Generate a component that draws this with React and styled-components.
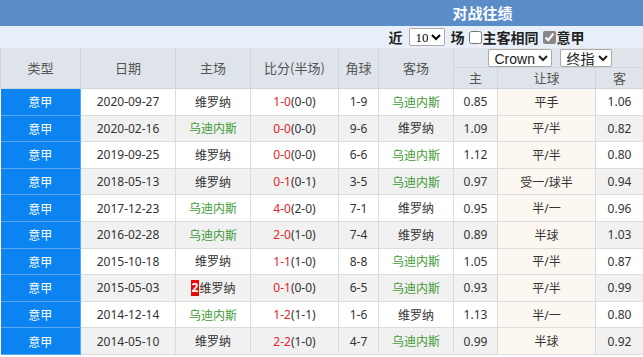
import styled, { createGlobalStyle } from "styled-components";

const GlobalStyle = createGlobalStyle`
  html, body { margin: 0; padding: 0; background: #fff; }
  body { font-family: "Noto Sans", "Noto Sans CJK SC", sans-serif; }
`;

const rows = [
  { date: "2020-09-27", home: "维罗纳", homeGreen: false, ft: "1-0", ht: "(0-0)", corner: "1-9", away: "乌迪内斯", awayGreen: true, h: "0.85", line: "平手", a: "1.06" },
  { date: "2020-02-16", home: "乌迪内斯", homeGreen: true, ft: "0-0", ht: "(0-0)", corner: "9-6", away: "维罗纳", awayGreen: false, h: "1.09", line: "平/半", a: "0.82" },
  { date: "2019-09-25", home: "维罗纳", homeGreen: false, ft: "0-0", ht: "(0-0)", corner: "6-6", away: "乌迪内斯", awayGreen: true, h: "1.12", line: "平/半", a: "0.80" },
  { date: "2018-05-13", home: "维罗纳", homeGreen: false, ft: "0-1", ht: "(0-1)", corner: "3-5", away: "乌迪内斯", awayGreen: true, h: "0.97", line: "受一/球半", a: "0.94" },
  { date: "2017-12-23", home: "乌迪内斯", homeGreen: true, ft: "4-0", ht: "(2-0)", corner: "7-1", away: "维罗纳", awayGreen: false, h: "0.95", line: "半/一", a: "0.96" },
  { date: "2016-02-28", home: "乌迪内斯", homeGreen: true, ft: "2-0", ht: "(1-0)", corner: "7-4", away: "维罗纳", awayGreen: false, h: "0.89", line: "半球", a: "1.03" },
  { date: "2015-10-18", home: "维罗纳", homeGreen: false, ft: "1-1", ht: "(1-0)", corner: "8-8", away: "乌迪内斯", awayGreen: true, h: "1.05", line: "平/半", a: "0.87" },
  { date: "2015-05-03", home: "维罗纳", homeGreen: false, badge: "2", ft: "0-1", ht: "(0-0)", corner: "6-5", away: "乌迪内斯", awayGreen: true, h: "0.93", line: "平/半", a: "0.99" },
  { date: "2014-12-14", home: "乌迪内斯", homeGreen: true, ft: "1-2", ht: "(1-1)", corner: "1-6", away: "维罗纳", awayGreen: false, h: "1.13", line: "半/一", a: "0.80" },
  { date: "2014-05-10", home: "维罗纳", homeGreen: false, ft: "2-2", ht: "(1-0)", corner: "4-7", away: "乌迪内斯", awayGreen: true, h: "0.99", line: "半球", a: "0.92" },
];

export default function App() {
  return (
    <Wrap>
      <GlobalStyle />
      <TitleBar>对战往绩</TitleBar>
      <Controls>
        <span>近</span>
        <CountSelect defaultValue="10">
          <option value="10">10</option>
          <option value="20">20</option>
        </CountSelect>
        <span>场</span>
        <Check>
          <input type="checkbox" />
          主客相同
        </Check>
        <Check>
          <input type="checkbox" defaultChecked />
          意甲
        </Check>
      </Controls>
      <Table>
        <colgroup>
          <col style={{ width: 80 }} />
          <col style={{ width: 95 }} />
          <col style={{ width: 75 }} />
          <col style={{ width: 88 }} />
          <col style={{ width: 40 }} />
          <col style={{ width: 75 }} />
          <col style={{ width: 44 }} />
          <col style={{ width: 98 }} />
          <col style={{ width: 48 }} />
        </colgroup>
        <thead>
          <tr>
            <Th rowSpan={2}>类型</Th>
            <Th rowSpan={2}>日期</Th>
            <Th rowSpan={2}>主场</Th>
            <Th rowSpan={2}>比分(半场)</Th>
            <Th rowSpan={2}>角球</Th>
            <Th rowSpan={2}>客场</Th>
            <Th colSpan={3} $top>
              <OddsPick>
                <OddsSelect defaultValue="Crown" $w={64}>
                  <option>Crown</option>
                </OddsSelect>
                <OddsSelect defaultValue="终指" $w={52}>
                  <option>终指</option>
                </OddsSelect>
              </OddsPick>
            </Th>
          </tr>
          <tr>
            <Th $sub>主</Th>
            <Th $sub>让球</Th>
            <Th $sub>客</Th>
          </tr>
        </thead>
        <tbody>
          {rows.map((r, i) => (
            <Row key={i} $alt={i % 2 === 1}>
              <League>意甲</League>
              <Td>{r.date}</Td>
              <Td>
                {r.badge && <Badge>{r.badge}</Badge>}
                <Team $green={r.homeGreen}>{r.home}</Team>
              </Td>
              <Td>
                <Score>{r.ft}</Score>
                {r.ht}
              </Td>
              <Td>{r.corner}</Td>
              <Td>
                <Team $green={r.awayGreen}>{r.away}</Team>
              </Td>
              <Td>{r.h}</Td>
              <Td $line>{r.line}</Td>
              <Td>{r.a}</Td>
            </Row>
          ))}
        </tbody>
      </Table>
    </Wrap>
  );
}

const Wrap = styled.div`
  width: 643px;
  overflow: hidden;
`;

const TitleBar = styled.div`
  height: 26px;
  line-height: 26px;
  background: #5a8dc8;
  color: #fff;
  font-family: "Noto Sans CJK SC", sans-serif;
  font-weight: bold;
  font-size: 15px;
  text-align: center;
  padding-left: 322px;
`;

const Controls = styled.div`
  height: 22px;
  background: #e9eff8;
  display: flex;
  align-items: center;
  justify-content: center;
  padding-left: 330px;
  gap: 4px;
  font-family: "Noto Sans CJK SC", sans-serif;
  font-weight: bold;
  font-size: 14px;
  color: #222;
`;

const CountSelect = styled.select`
  width: 36px;
  height: 18px;
  font-family: "Liberation Serif", serif;
  font-size: 13px;
  padding: 0 0 0 2px;
  border: 1px solid #aaa;
  border-radius: 2px;
  background: #fff;
  margin: 0 2px;
`;

const Check = styled.label`
  display: flex;
  align-items: center;

  input {
    margin: 0 1px 0 0;
    width: 13px;
    height: 13px;
    accent-color: #888;
  }
`;

const Table = styled.table`
  width: 643px;
  table-layout: fixed;
  border-collapse: collapse;
  font-size: 12px;
  color: #333;
  text-align: center;
`;

const Th = styled.th`
  background: #dfe4ea;
  color: #555;
  font-weight: normal;
  font-family: "Noto Sans CJK SC", sans-serif;
  font-size: 13px;
  border: 1px solid #cfd5dc;
  border-top: none;
  height: ${(p) => (p.$top || p.$sub ? "19px" : "40px")};
  padding: 0;
  line-height: 18px;
  ${(p) => p.$top && "border-bottom: 1px solid #cfd5dc;"}
`;

const OddsPick = styled.div`
  display: flex;
  justify-content: center;
  gap: 8px;
  padding-left: 2px;
`;

const OddsSelect = styled.select`
  box-sizing: border-box;
  width: ${(p) => p.$w}px;
  height: 18px;
  font-family: "Liberation Sans", "Noto Sans CJK SC", sans-serif;
  font-size: 14px;
  padding: 0 0 0 2px;
  border: 1px solid #aaa;
  border-radius: 2px;
  background: #fff;
  color: #222;
`;

const Row = styled.tr`
  height: 26.6px;
  background: ${(p) => (p.$alt ? "#f1f1f1" : "#fff")};
`;

const Td = styled.td`
  border: 1px solid #dcdcdc;
  padding: 0;
  white-space: nowrap;
  ${(p) => p.$line && "background: #fcf7f0;"}
`;

const League = styled.td`
  background: #0b84f1;
  color: #fff;
  border: 1px solid #5aa8f2;
  border-left: none;
  font-family: "Noto Sans CJK SC", sans-serif;
  padding: 0;
`;

const Team = styled.span`
  font-family: "Noto Sans CJK SC", sans-serif;
  color: ${(p) => (p.$green ? "#3f9a36" : "#333")};
`;

const Score = styled.span`
  color: #e5232b;
`;

const Badge = styled.span`
  display: inline-block;
  background: #e60b0b;
  color: #fff;
  font-weight: bold;
  font-size: 12px;
  line-height: 16px;
  padding: 0 1px;
  vertical-align: 1px;
`;
